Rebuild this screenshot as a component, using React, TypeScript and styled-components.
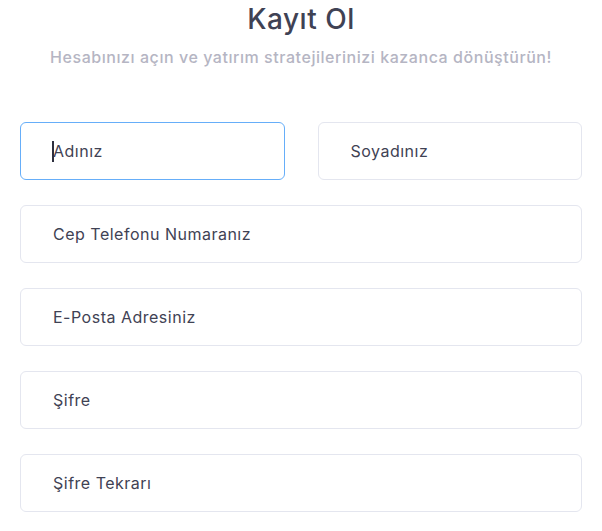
import React from "react";
import styled, { createGlobalStyle } from "styled-components";

const GlobalStyle = createGlobalStyle`
  html, body {
    margin: 0;
    padding: 0;
    background: #ffffff;
    font-family: "Inter", "Noto Sans", sans-serif;
  }
`;

const Page = styled.div`
  padding: 0 20px;
  display: flex;
  flex-direction: column;
`;

const Title = styled.h1`
  margin: 2px 0 0;
  text-align: center;
  font-size: 28px;
  line-height: 34px;
  font-weight: 500;
  letter-spacing: 0.5px;
  color: #3f4254;
`;

const Subtitle = styled.p`
  margin: 10px 0 0;
  text-align: center;
  font-size: 16px;
  line-height: 22px;
  font-weight: 500;
  letter-spacing: 0.55px;
  color: #b5b5c3;
`;

const Form = styled.form`
  margin-top: 54px;
  display: flex;
  flex-direction: column;
  gap: 25px;
`;

const Row = styled.div`
  display: grid;
  grid-template-columns: 1fr 1fr;
  gap: 33px;
`;

const Field = styled.div`
  position: relative;
`;

const Caret = styled.span`
  position: absolute;
  left: 32px;
  top: 19px;
  width: 2px;
  height: 21px;
  background: #2d2f3e;
`;

const Input = styled.input<{ $active?: boolean }>`
  box-sizing: border-box;
  display: block;
  width: 100%;
  height: 58px;
  padding: 0 32px;
  border: 1px solid ${(p) => (p.$active ? "#66aef9" : "#e4e6ef")};
  border-radius: 6px;
  background: #ffffff;
  font-family: inherit;
  font-size: 16px;
  letter-spacing: 0.5px;
  color: #3f4254;
  caret-color: #3f4254;
  outline: none;

  &::placeholder {
    color: #3f4254;
    opacity: 1;
  }
`;

const App: React.FC = () => (
  <Page>
    <GlobalStyle />
    <Title>Kayıt Ol</Title>
    <Subtitle>Hesabınızı açın ve yatırım stratejilerinizi kazanca dönüştürün!</Subtitle>
    <Form onSubmit={(e) => e.preventDefault()}>
      <Row>
        <Field>
          <Input $active placeholder="Adınız" />
          <Caret />
        </Field>
        <Input placeholder="Soyadınız" />
      </Row>
      <Input placeholder="Cep Telefonu Numaranız" />
      <Input placeholder="E-Posta Adresiniz" />
      <Input type="password" placeholder="Şifre" />
      <Input type="password" placeholder="Şifre Tekrarı" />
    </Form>
  </Page>
);

export default App;
